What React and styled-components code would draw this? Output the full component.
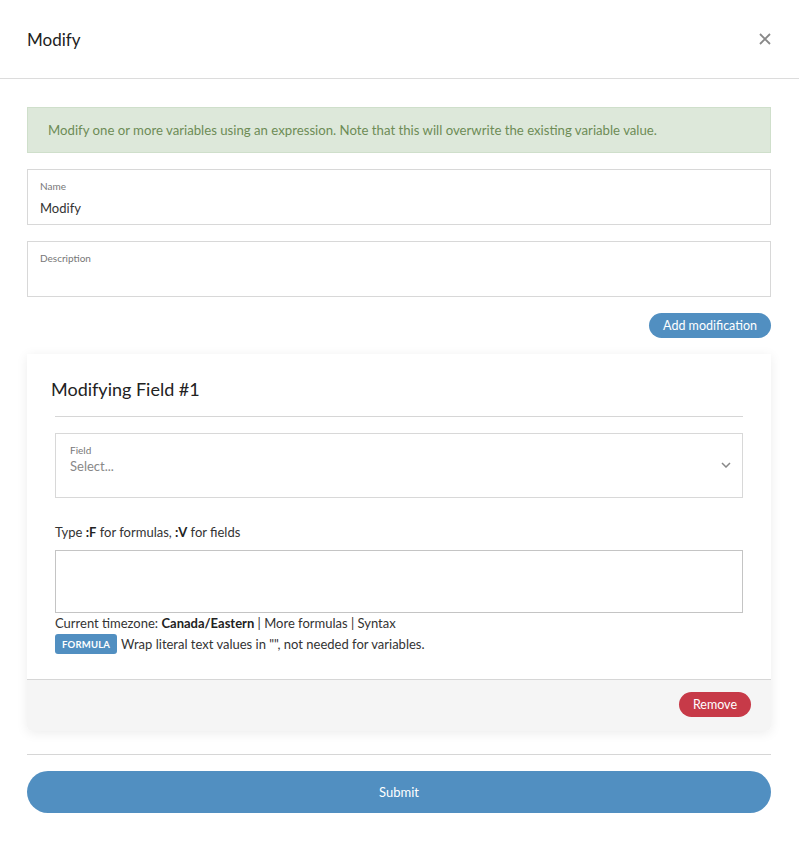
import React from "react"
import styled, { createGlobalStyle } from "styled-components"

const GlobalStyle = createGlobalStyle`
  html, body {
    margin: 0;
    padding: 0;
    background: #fff;
    font-family: Lato, "Open Sans", sans-serif;
    color: #212529;
  }
`

const Modal = styled.div`
  width: 799px;
  min-height: 842px;
  background: #fff;
`

const Header = styled.div`
  display: flex;
  align-items: center;
  justify-content: space-between;
  height: 78px;
  padding: 0 28px 0 27px;
  border-bottom: 1px solid #dcdcdc;
`

const Title = styled.h5`
  margin: 0;
  font-size: 17px;
  font-weight: 400;
  color: #222;
`

const Close = styled.button`
  border: 0;
  background: none;
  padding: 0;
  color: #888;
  line-height: 1;
  display: flex;
  cursor: pointer;
`

const Body = styled.div`
  padding: 28px 28px 0 27px;
  display: flex;
  flex-direction: column;
`

const Alert = styled.div`
  height: 46px;
  box-sizing: border-box;
  display: flex;
  align-items: center;
  padding: 0 20px;
  background: #dde8da;
  border: 1px solid #cfdfcb;
  color: #6d8c56;
  font-size: 13.2px;
`

const FloatBox = styled.div`
  margin-top: ${p => p.$mt ?? 16}px;
  height: ${p => p.$h || 56}px;
  box-sizing: border-box;
  border: 1px solid #d8d8d8;
  padding: ${p => p.$pad || "10px 12px"};
  display: flex;
  flex-direction: column;
  position: relative;
`

const SmallLabel = styled.label`
  font-size: 10px;
  color: #777;
  line-height: 12px;
`

const Value = styled.div`
  margin-top: ${p => p.$mt || 8}px;
  font-size: 13px;
  color: ${p => p.$muted ? "#888" : "#333"};
  line-height: 16px;
`

const Actions = styled.div`
  display: flex;
  justify-content: flex-end;
  margin-top: 16px;
`

const Pill = styled.button`
  border: 0;
  border-radius: 13px;
  height: 25px;
  padding: 0 14px;
  background: ${p => p.$bg};
  color: #fff;
  font-family: inherit;
  font-size: 12.5px;
  cursor: pointer;
`

const Card = styled.div`
  margin-top: 16px;
  background: #fff;
  border-radius: 0 0 5px 5px;
  box-shadow: 0 2px 12px rgba(0, 0, 0, 0.08);
  display: flex;
  flex-direction: column;
`

const CardBody = styled.div`
  padding: 23px 28px 25px;
  display: flex;
  flex-direction: column;
`

const CardTitle = styled.h4`
  margin: 0 0 0 -4px;
  font-size: 18px;
  font-weight: 400;
  color: #222;
  line-height: 24px;
`

const Rule = styled.hr`
  border: 0;
  border-top: 1px solid #d6d6d6;
  margin: ${p => p.$m || "15px 0 16px"};
`

const Chevron = styled.svg`
  position: absolute;
  right: 11px;
  top: 28px;
`

const Hint = styled.div`
  margin-top: 26px;
  font-size: 13px;
  color: #333;
  b { font-weight: 700; color: #222; }
`

const TextArea = styled.div`
  margin-top: 10px;
  height: 63px;
  box-sizing: border-box;
  border: 1px solid #c4c4c4;
`

const Help = styled.div`
  font-size: 13px;
  color: #333;
  line-height: 18px;
  margin-top: 1px;
  b { font-weight: 700; color: #222; }
`

const BadgeRow = styled.div`
  display: flex;
  align-items: center;
  gap: 4px;
  font-size: 13px;
  color: #333;
  margin-top: 2px;
`

const Badge = styled.span`
  background: #518fc1;
  color: #fff;
  font-size: 9.5px;
  font-weight: 700;
  border-radius: 3px;
  padding: 0 7px;
  height: 20px;
  display: inline-flex;
  align-items: center;
  letter-spacing: 0.2px;
`

const CardFooter = styled.div`
  background: #f5f5f5;
  border-top: 1px solid #d6d6d6;
  border-radius: 0 0 5px 5px;
  height: 52px;
  box-sizing: border-box;
  display: flex;
  align-items: center;
  justify-content: flex-end;
  padding: 0 20px 2px;
`

const Submit = styled.button`
  height: 42px;
  border: 0;
  border-radius: 21px;
  background: #518fc1;
  color: #fff;
  font-family: inherit;
  font-size: 13px;
  cursor: pointer;
`

export default function App() {
  return (
    <Modal>
      <GlobalStyle />
      <Header>
        <Title>Modify</Title>
        <Close aria-label="Close">
          <svg width="12" height="12" viewBox="0 0 12 12">
            <path d="M1 1L11 11M11 1L1 11" stroke="#888" strokeWidth="1.8" />
          </svg>
        </Close>
      </Header>
      <Body>
        <Alert>
          Modify one or more variables using an expression. Note that this will overwrite the existing variable value.
        </Alert>
        <FloatBox>
          <SmallLabel>Name</SmallLabel>
          <Value>Modify</Value>
        </FloatBox>
        <FloatBox>
          <SmallLabel>Description</SmallLabel>
        </FloatBox>
        <Actions>
          <Pill $bg="#518fc1">Add modification</Pill>
        </Actions>
        <Card>
          <CardBody>
            <CardTitle>Modifying Field #1</CardTitle>
            <Rule />
            <FloatBox $h={65} $mt={0} $pad="10px 14px">
              <SmallLabel>Field</SmallLabel>
              <Value $muted $mt={2}>Select...</Value>
              <Chevron width="10" height="6" viewBox="0 0 10 6">
                <path d="M1 1l4 4 4-4" fill="none" stroke="#888" strokeWidth="1.5" />
              </Chevron>
            </FloatBox>
            <Hint>
              Type <b>:F</b> for formulas, <b>:V</b> for fields
            </Hint>
            <TextArea />
            <Help>
              Current timezone: <b>Canada/Eastern</b> | More formulas | Syntax
            </Help>
            <BadgeRow>
              <Badge>FORMULA</Badge>
              Wrap literal text values in "", not needed for variables.
            </BadgeRow>
          </CardBody>
          <CardFooter>
            <Pill $bg="#c73a48">Remove</Pill>
          </CardFooter>
        </Card>
        <Rule $m="23px 0 16px" />
        <Submit>Submit</Submit>
      </Body>
    </Modal>
  )
}
